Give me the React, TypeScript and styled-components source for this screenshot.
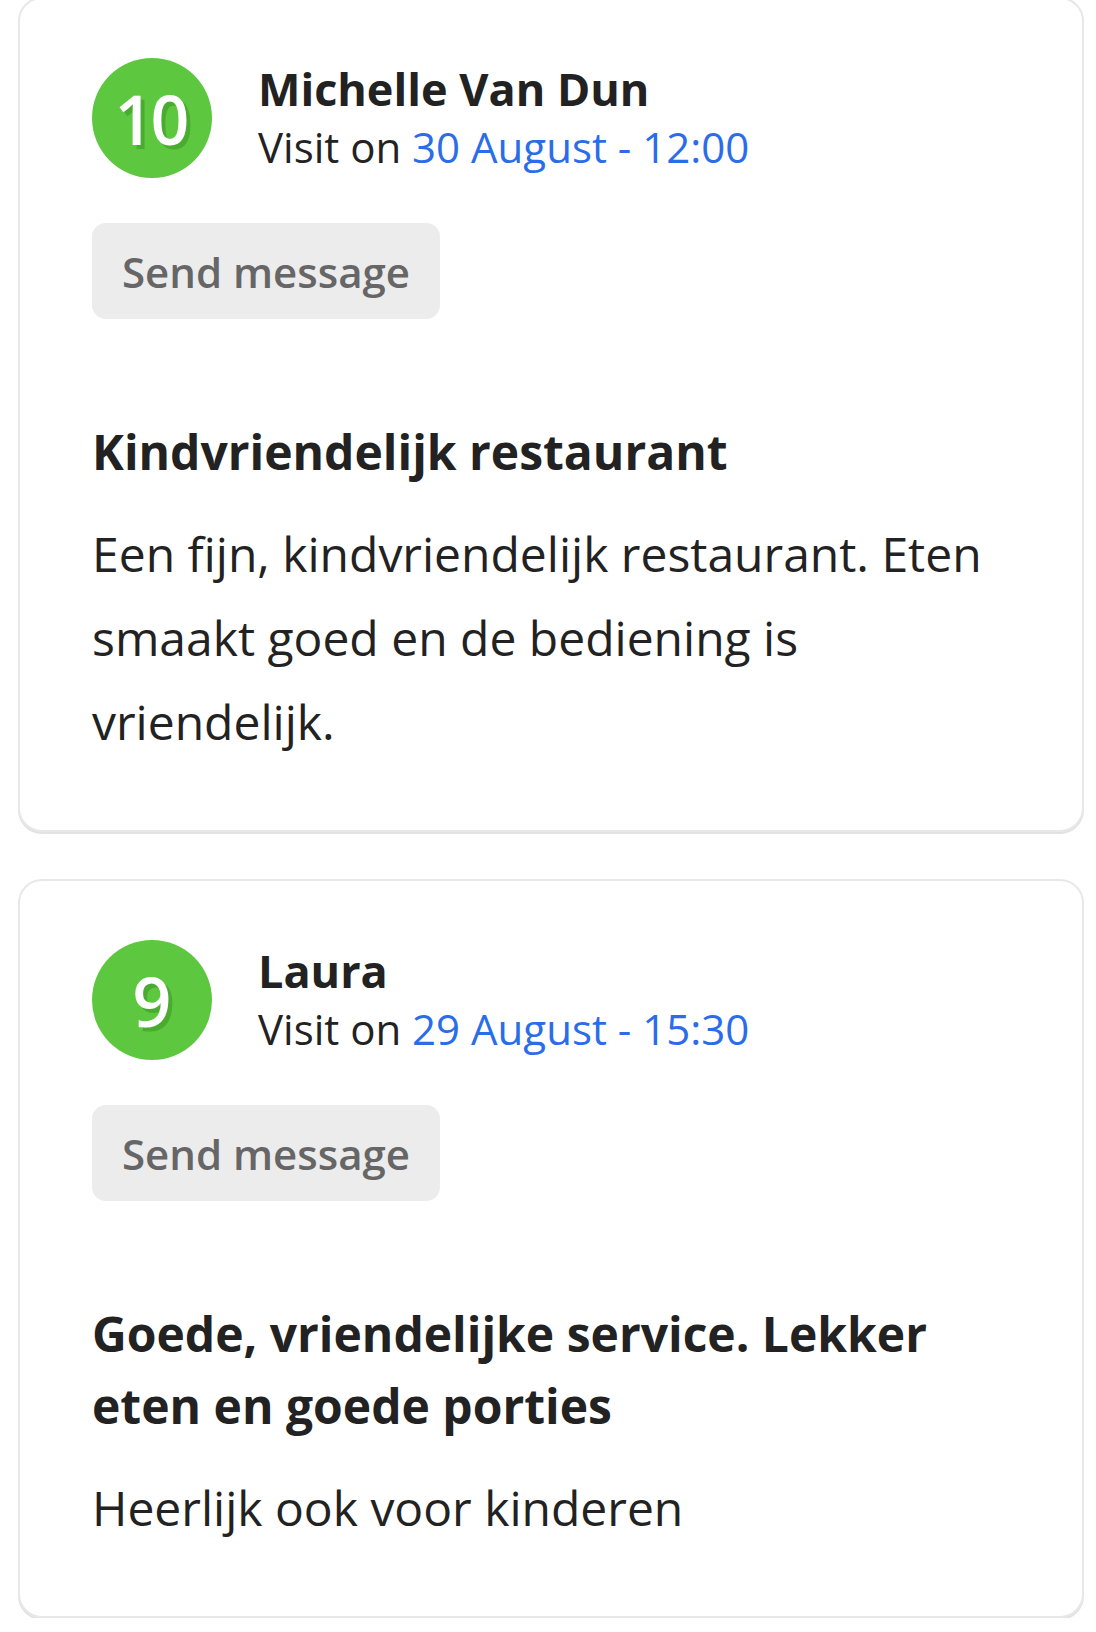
import styled, { createGlobalStyle } from "styled-components";

interface Review {
  score: number;
  name: string;
  date: string;
  title: string;
  body: string;
}

const reviews: Review[] = [
  {
    score: 10,
    name: "Michelle Van Dun",
    date: "30 August - 12:00",
    title: "Kindvriendelijk restaurant",
    body: "Een fijn, kindvriendelijk restaurant. Eten smaakt goed en de bediening is vriendelijk.",
  },
  {
    score: 9,
    name: "Laura",
    date: "29 August - 15:30",
    title: "Goede, vriendelijke service. Lekker eten en goede porties",
    body: "Heerlijk ook voor kinderen",
  },
];

// ─── Styled Components ────────────────────────────────────────────────────────

const GlobalStyle = createGlobalStyle`
  html, body {
    margin: 0;
    padding: 0;
    background: #fff;
  }
  body {
    font-family: "Open Sans", "Noto Sans", sans-serif;
    color: #222;
    -webkit-font-smoothing: antialiased;
  }
  * { box-sizing: border-box; }
`;

const List = styled.div`
  display: flex;
  flex-direction: column;
  gap: 47px;
  margin-top: -3px;
  padding: 0 12px 0 18px;
`;

const Card = styled.article`
  border: 2px solid #e8e8e8;
  border-radius: 24px;
  padding: 59px 72px 66px;
  background: #fff;
  box-shadow: 0 2px 0 #e2e2e2;
`;

const Header = styled.div`
  display: flex;
  align-items: center;
  gap: 46px;
`;

const Score = styled.div`
  width: 120px;
  height: 120px;
  flex-shrink: 0;
  border-radius: 50%;
  background: #5dc73f;
  color: #fff;
  display: flex;
  align-items: center;
  justify-content: center;
  font-size: 68px;
  font-weight: 600;
  letter-spacing: -3px;
  padding-right: 3px;
  text-shadow: 4px 4px 0 rgba(30, 110, 10, 0.3);
`;

const Who = styled.div`
  display: flex;
  flex-direction: column;
  line-height: 58px;
`;

const Name = styled.span`
  font-size: 45px;
  font-weight: 700;
  color: #222;
`;

const Visit = styled.span`
  font-size: 42px;
  color: #222;
`;

const DateLink = styled.span`
  color: #2b6de8;
`;

const MessageButton = styled.button`
  align-self: flex-start;
  margin-top: 45px;
  height: 96px;
  padding: 0 30px;
  border: none;
  border-radius: 14px;
  background: #ececec;
  color: #666;
  font-family: inherit;
  font-size: 42px;
  font-weight: 600;
  cursor: pointer;
`;

const Title = styled.h3`
  margin: 97px 0 0;
  font-size: 48px;
  line-height: 72px;
  font-weight: 700;
  color: #222;
`;

const Body = styled.p`
  margin: 24px 0 0;
  font-size: 48px;
  line-height: 84px;
  color: #222;
`;

// ─── Component ────────────────────────────────────────────────────────────────

export default function App() {
  return (
    <>
      <GlobalStyle />
      <List>
        {reviews.map((r) => (
          <Card key={r.name}>
            <Header>
              <Score>{r.score}</Score>
              <Who>
                <Name>{r.name}</Name>
                <Visit>
                  Visit on <DateLink>{r.date}</DateLink>
                </Visit>
              </Who>
            </Header>
            <MessageButton>Send message</MessageButton>
            <Title>{r.title}</Title>
            <Body>{r.body}</Body>
          </Card>
        ))}
      </List>
    </>
  );
}
